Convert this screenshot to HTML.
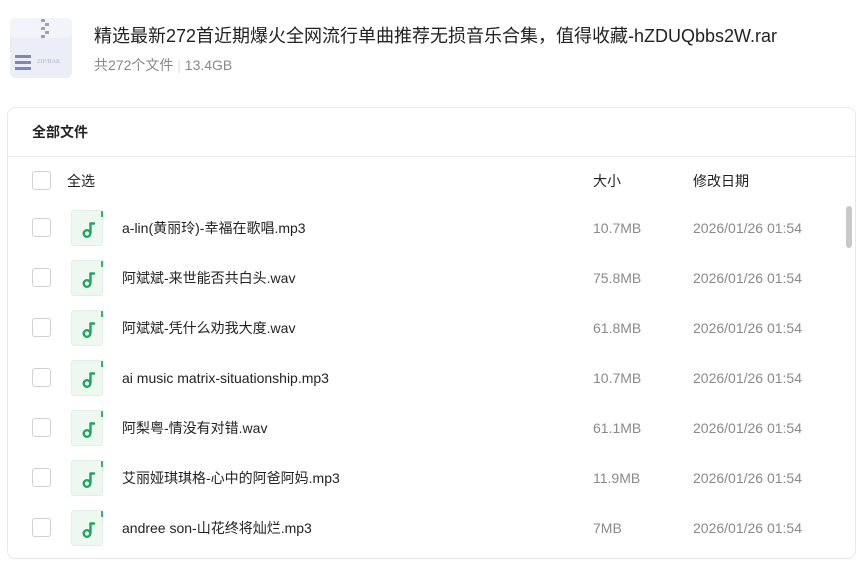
<!DOCTYPE html>
<html><head><meta charset="utf-8"><style>
*{margin:0;padding:0;box-sizing:border-box}
body{width:859px;height:570px;background:#fff;font-family:"Liberation Sans","Noto Sans CJK SC",sans-serif;position:relative;overflow:hidden;color:#222}
.abs{position:absolute}
.title{left:94px;top:24px;font-size:18px;line-height:24px;color:#222;white-space:nowrap}
.sub{left:94px;top:55px;font-size:14px;line-height:20px;color:#888}
.panel{left:7px;top:107px;width:849px;height:452px;border:1px solid #e8e8e8;border-radius:8px}
.hd{left:32px;top:122px;font-size:14px;line-height:20px;font-weight:bold;color:#222}
.line{left:8px;top:156px;width:847px;height:1px;background:#e8e8e8}
.cb{width:19px;height:19px;border:1px solid #d0d0d0;border-radius:3px;background:#fff}
.row{position:absolute;left:0;width:859px;height:50px}
.row .cb{position:absolute;left:32px;top:15px}
.ic{position:absolute;left:71px;top:7px;width:32px;height:36px;background:#eef8f1;border-radius:3px;border:1px solid #e2efe6}
.nm,.sz,.dt{position:absolute;top:15px;font-size:14px;line-height:20px}
.nm{left:122px;color:#222}
.sz{left:593px;color:#8a8a8a}
.dt{left:693px;color:#8a8a8a}
</style></head><body>
<svg class="abs" style="left:9px;top:16px" width="64" height="64" viewBox="0 0 64 64">
<rect x="1" y="2" width="62" height="60" rx="5" fill="#eceef7"/>
<rect x="1" y="2" width="62" height="20" rx="5" fill="#f3f4fa"/>
<rect x="32" y="3" width="4" height="3" fill="#9aa0c0"/><rect x="36" y="7" width="4" height="3" fill="#9aa0c0"/><rect x="32" y="11" width="4" height="3" fill="#9aa0c0"/><rect x="36" y="15" width="4" height="3" fill="#9aa0c0"/><rect x="32" y="19" width="4" height="3" fill="#9aa0c0"/>
<rect x="6" y="39" width="16" height="3" fill="#8088b0"/><rect x="6" y="45" width="16" height="3" fill="#8088b0"/><rect x="6" y="51" width="16" height="3" fill="#8088b0"/>
<text x="28" y="47" font-size="6" fill="#b0b4cc" font-family="Liberation Serif">ZIP/RAR</text>
</svg>
<div class="abs title">精选最新272首近期爆火全网流行单曲推荐无损音乐合集，值得收藏-hZDUQbbs2W.rar</div>
<div class="abs sub">共272个文件 <span style="color:#ddd">|</span> 13.4GB</div>
<div class="abs panel"></div>
<div class="abs hd">全部文件</div>
<div class="abs line"></div>
<div class="row" style="top:156px"><div class="cb"></div><div class="nm" style="left:67px;top:15px">全选</div><div class="sz" style="color:#222">大小</div><div class="dt" style="color:#222">修改日期</div></div>
<div class="abs" style="left:846px;top:206px;width:6px;height:42px;background:#c8c8c8;border-radius:3px"></div>
<div id="rows"></div>
<script>
const d=[["a-lin(黄丽玲)-幸福在歌唱.mp3","10.7MB"],["阿斌斌-来世能否共白头.wav","75.8MB"],["阿斌斌-凭什么劝我大度.wav","61.8MB"],["ai music matrix-situationship.mp3","10.7MB"],["阿梨粤-情没有对错.wav","61.1MB"],["艾丽娅琪琪格-心中的阿爸阿妈.mp3","11.9MB"],["andree son-山花终将灿烂.mp3","7MB"]];
let h="";d.forEach((r,i)=>{h+=`<div class="row" style="top:${203+i*50}px"><div class="cb"></div><div class="ic"><svg width="32" height="36" viewBox="0 0 32 36"><rect x="29" y="0" width="2" height="6" fill="#2bb673"/><path d="M18.5 12v10" stroke="#1fa463" stroke-width="2.4" fill="none"/><path d="M18.5 12.5h3.5" stroke="#1fa463" stroke-width="2.4" fill="none" stroke-linecap="round"/><circle cx="15" cy="22.5" r="3.3" stroke="#1fa463" stroke-width="2.4" fill="none"/></svg></div><div class="nm">${r[0]}</div><div class="sz">${r[1]}</div><div class="dt">2026/01/26 01:54</div></div>`});
document.getElementById("rows").innerHTML=h;
</script>
</body></html>
